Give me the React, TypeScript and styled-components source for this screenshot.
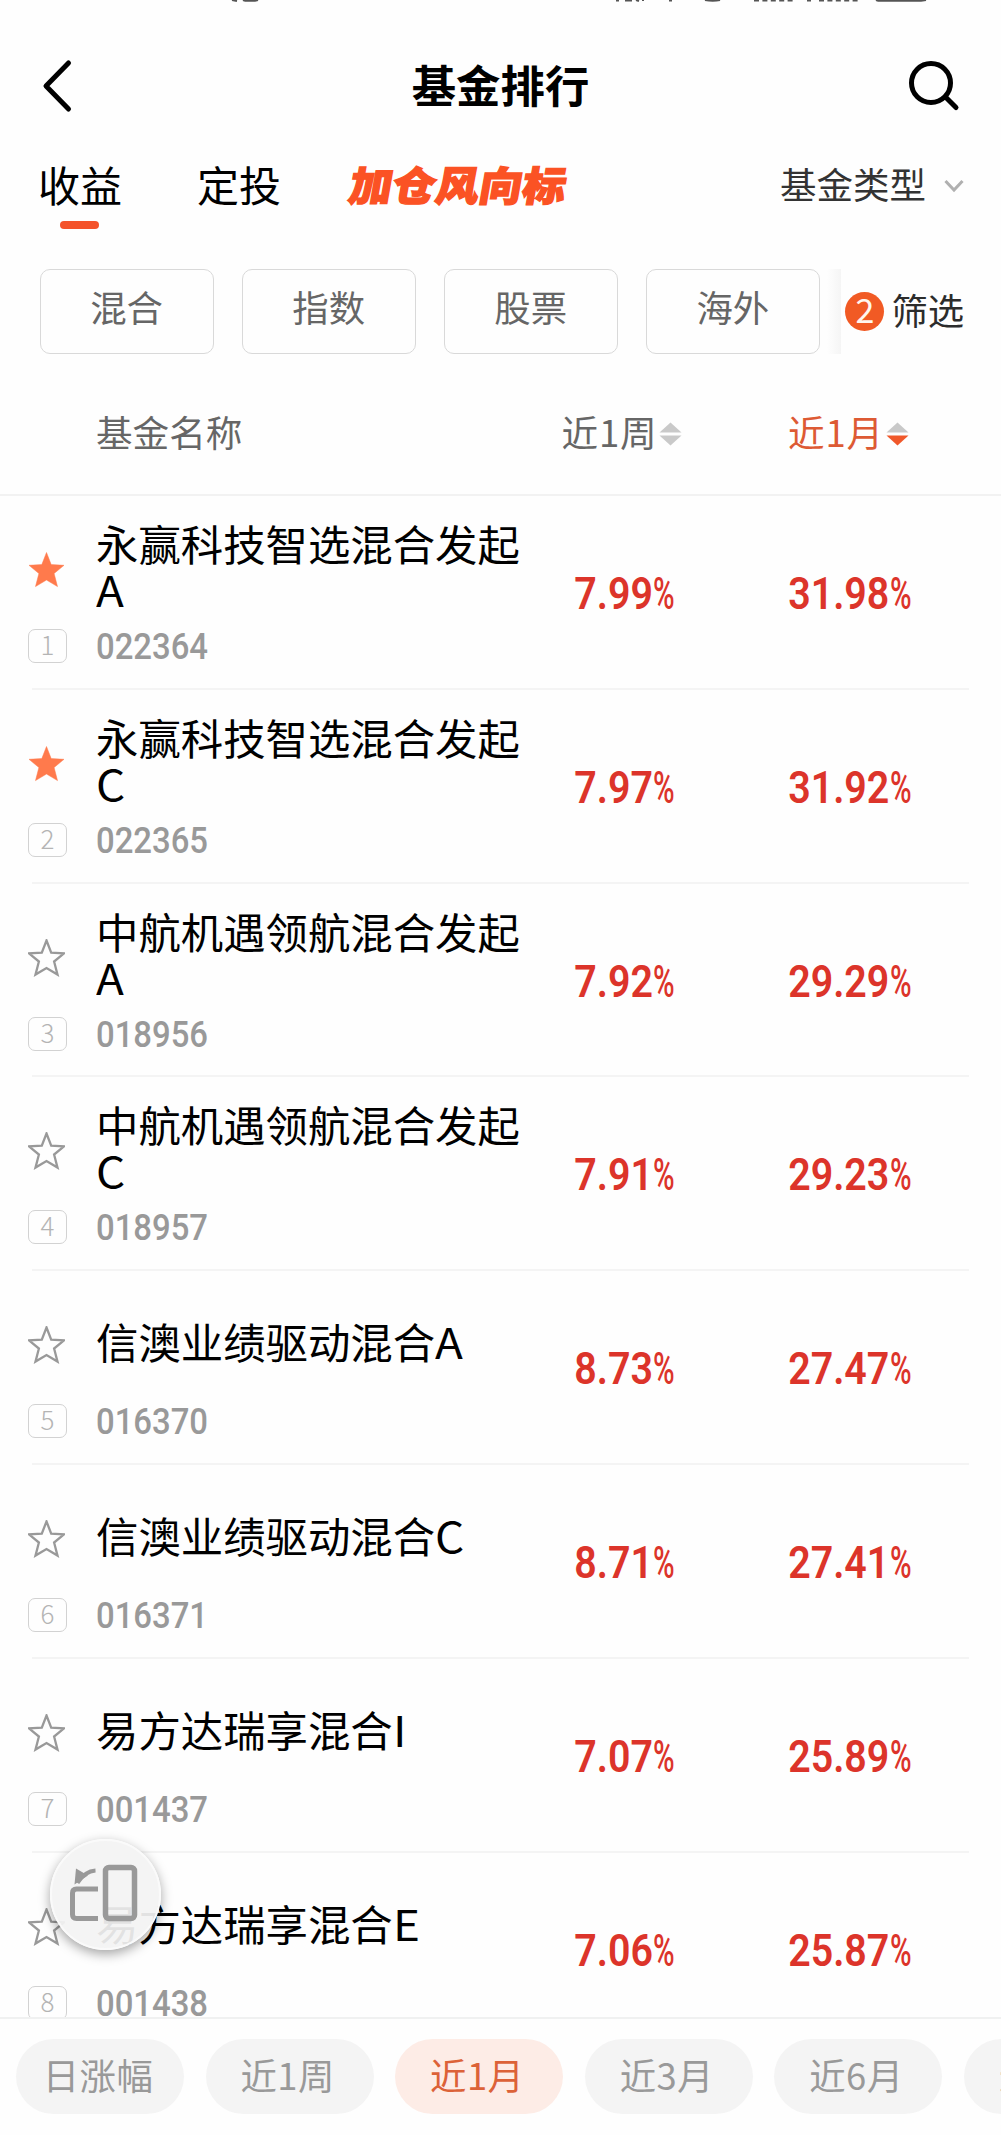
import React from "react";
import styled, { createGlobalStyle } from "styled-components";

const Global = createGlobalStyle`
  * { box-sizing: border-box; }
  html, body { margin: 0; padding: 0; background: #fefefe; }
  body {
    font-family: "Noto Sans CJK SC", sans-serif;
    color: #000;
    overflow: hidden;
  }
`;

const Screen = styled.div`
  position: relative;
  width: 1001px;
  height: 2135px;
  display: flex;
  flex-direction: column;
  overflow: hidden;
  background: #fefefe;
`;

const StatusBar = styled.div`
  height: 4px;
  flex: none;
  svg { display: block; }
`;

const TitleBar = styled.header`
  height: 128px;
  padding: 36px 40px 0;
  display: grid;
  grid-template-columns: 60px 1fr 60px;
  align-items: start;
  align-content: start;
  flex: none;
  svg { display: block; margin-top: 18px; }
`;

const Title = styled.h1`
  margin: 14px 0 0;
  text-align: center;
  font-size: 44.4px;
  line-height: 60px;
  font-weight: 700;
`;

const TabBar = styled.nav`
  flex: none;
  height: 104px;
  padding: 20px 37px 0 38px;
  display: flex;
  align-items: flex-start;
`;

const Tab = styled.div`
  display: flex;
  flex-direction: column;
  width: 84px;
  margin-right: 75px;
  font-size: 42px;
  line-height: 64px;
`;

const Underline = styled.i`
  width: 39px;
  height: 8px;
  margin: 5px 0 0 22px;
  border-radius: 4px;
  background: #f4522a;
`;

const PromoTab = styled.div`
  width: 220px;
  margin-left: -6px;
  font-size: 40.5px;
  line-height: 64px;
  font-weight: 900;
  color: #fb5224;
  white-space: nowrap;
  -webkit-text-stroke: 1.4px #fb5224;
  transform: skewX(-10deg) scaleX(1.07);
  transform-origin: 0 50%;
`;

const TypePicker = styled.div`
  margin-left: auto;
  display: flex;
  align-items: center;
  gap: 18px;
  font-size: 36.5px;
  line-height: 64px;
  color: #333;
  svg { margin-top: 3px; }
`;

const FilterBar = styled.div`
  flex: none;
  height: 86px;
  margin-top: 33px;
  padding-left: 39.500px;
  display: flex;
  align-items: flex-start;
`;

const Chips = styled.div`
  display: flex;
  gap: 27.900px;
`;

const Chip = styled.button`
  width: 174.200px;
  height: 85px;
  padding: 0 0 11px;
  border: 1.5px solid #d9d9d9;
  border-radius: 10px;
  background: #fefefe;
  font: 36.4px/60px "Noto Sans CJK SC", sans-serif;
  color: #666;
`;

const Edge = styled.div`
  width: 14px;
  height: 85px;
  margin-left: 7px;
  background: linear-gradient(to right, #fefefe, #f5f5f5);
`;

const FilterButton = styled.div`
  height: 85px;
  margin-left: 4.500px;
  display: flex;
  align-items: center;
  gap: 7px;
  font-size: 36.4px;
  line-height: 60px;
  color: #2c2c2c;
`;

const Count = styled.span`
  width: 39px;
  height: 39px;
  border-radius: 50%;
  background: #f15a24;
  color: #fff6ee;
  font-size: 34px;
  line-height: 34px;
  text-align: center;
`;

const FilterLabel = styled.span`
  padding-bottom: 5px;
`;

const TableHead = styled.div`
  flex: none;
  height: 141px;
  padding: 47px 0 0 96px;
  display: grid;
  grid-template-columns: 465.500px 226.500px 1fr;
  border-bottom: 2px solid #f2f2f2;
  font-size: 36.6px;
  line-height: 60px;
  color: #666;
`;

const SortHead = styled.div<{ $active?: boolean }>`
  display: flex;
  align-items: center;
  height: 60px;
  gap: 2px;
  letter-spacing: 0.8px;
  color: ${(p) => (p.$active ? "#dd5a34" : "#666")};
  svg { margin-top: 3px; }
`;

const List = styled.main`
  flex: 1;
  min-height: 0;
  overflow: hidden;
`;

const Row = styled.article`
  height: 193.8px;
  margin: 0 32px;
  border-bottom: 2px solid #f4f4f4;
  display: grid;
  grid-template-columns: 64px 440px 1fr 1fr;
`;

const Mark = styled.div`
  margin-left: -4px;
  padding-top: 55px;
  display: flex;
  flex-direction: column;
  align-items: flex-start;
`;

const Rank = styled.span`
  width: 39px;
  height: 34px;
  margin-top: 40px;
  border: 1.5px solid #d2d2d2;
  border-radius: 7px;
  font-size: 26px;
  line-height: 28px;
  font-weight: 300;
  text-align: center;
  color: #b4b4b4;
`;

const Fund = styled.div`
  padding-top: 24px;
`;

const Name = styled.div`
  height: 92px;
  display: flex;
  align-items: center;
  font-size: 42.4px;
  line-height: 46px;
`;

const ShareClass = styled.span`
  display: inline-block;
  transform: scaleX(1.08);
  transform-origin: 0 50%;
`;

const Code = styled.div`
  margin-top: 13px;
  font-family: Roboto, sans-serif;
  font-size: 36.5px;
  line-height: 44px;
  font-weight: 500;
  color: #999;
  transform: scaleX(0.9);
  transform-origin: 0 50%;
`;

const Rate = styled.div<{ $end: number }>`
  display: flex;
  justify-content: flex-end;
  width: 140px;
  margin-left: ${(p) => p.$end - 140}px;
  padding-top: 71px;
  font-family: Roboto, sans-serif;
  font-size: 44.5px;
  line-height: 54px;
  color: #dc342a;
`;

const Digits = styled.span`
  font-weight: 600;
  transform: scaleX(0.885);
  transform-origin: 100% 50%;
`;

const Percent = styled.span`
  width: 22px;
  font-weight: 500;
  transform: scaleX(0.66);
  transform-origin: 0 50%;
`;

const PeriodBar = styled.footer`
  flex: none;
  height: 118px;
  padding: 20px 0 0 16px;
  border-top: 2px solid #f0f1f1;
  display: flex;
  gap: 21.6px;
  background: #fefefe;
`;

const Period = styled.button<{ $active?: boolean }>`
  flex: none;
  width: 168px;
  height: 75px;
  padding: 0 4px 5px 0;
  border: 0;
  border-radius: 38px;
  background: ${(p) => (p.$active ? "#fdece6" : "#f4f4f4")};
  color: ${(p) => (p.$active ? "#dc6238" : "#999")};
  font: 36.4px/60px "Noto Sans CJK SC", sans-serif;
  letter-spacing: 0.4px;
`;

const FloatButton = styled.div`
  position: absolute;
  left: 50px;
  top: 1839px;
  width: 111px;
  height: 111px;
  border-radius: 50%;
  border: 2px solid #fafafa;
  background: rgba(243, 243, 243, 0.93);
  box-shadow: 0 4px 12px rgba(0, 0, 0, 0.36);
  svg { display: block; margin: -2px; }
`;

const starPoints = "18.5,1.5 23.2,13.6 36,14.3 26.1,22.5 29.5,35.6 18.5,29 7.5,35.6 10.9,22.5 1,14.3 13.8,13.6";

const Star = ({ filled }: { filled: boolean }) => (
  <svg width="37" height="38" viewBox="0 0 37 38">
    <polygon
      points={starPoints}
      fill={filled ? "#ff7a4c" : "none"}
      stroke={filled ? "#ff7a4c" : "#999"}
      strokeWidth={filled ? 0.5 : 2.3}
    />
  </svg>
);

const SortArrows = ({ down }: { down?: boolean }) => (
  <svg width="23" height="24" viewBox="0 0 23 24">
    <path d="M11.5 0.5 22.5 10.5H0.5Z" fill="#c9c9c9" />
    <path d="M11.5 23.5 22.5 13.5H0.5Z" fill={down ? "#f0582a" : "#c9c9c9"} />
  </svg>
);

const funds = [
  { name: "永赢科技智选混合发起", cls: "A", code: "022364", week: "7.99", month: "31.98", starred: true },
  { name: "永赢科技智选混合发起", cls: "C", code: "022365", week: "7.97", month: "31.92", starred: true },
  { name: "中航机遇领航混合发起", cls: "A", code: "018956", week: "7.92", month: "29.29", starred: false },
  { name: "中航机遇领航混合发起", cls: "C", code: "018957", week: "7.91", month: "29.23", starred: false },
  { name: "信澳业绩驱动混合", cls: "A", code: "016370", week: "8.73", month: "27.47", starred: false },
  { name: "信澳业绩驱动混合", cls: "C", code: "016371", week: "8.71", month: "27.41", starred: false },
  { name: "易方达瑞享混合", cls: "I", code: "001437", week: "7.07", month: "25.89", starred: false },
  { name: "易方达瑞享混合", cls: "E", code: "001438", week: "7.06", month: "25.87", starred: false },
];

const chips = ["混合", "指数", "股票", "海外"];
const periods = ["日涨幅", "近1周", "近1月", "近3月", "近6月", "近1年"];

export default function App() {
  return (
    <Screen>
      <Global />
      <StatusBar>
        <svg width="1001" height="4" viewBox="0 0 1001 4" fill="none" stroke="#555" strokeWidth="2">
          <path d="M232 0l5 1M243 0q2 .8 5 .8h7l3-.8" />
          <path d="M616 .5h3M625 .5h7M636 0l3 1M643 0v1M669 .5h3M705 0q8 1.600 15 0" />
          <path d="M754 .6h39M807 .6h4M819 .6h40" strokeDasharray="5 3.400" />
          <path d="M876 0q2 .8 5 .8h40l5-.8" />
        </svg>
      </StatusBar>
      <TitleBar>
        <svg width="34" height="56" viewBox="0 0 34 56" fill="none" stroke="#000" strokeWidth="5" strokeLinecap="round" strokeLinejoin="round">
          <path d="M28.5 5 6 28 28.5 51" />
        </svg>
        <Title>基金排行</Title>
        <svg width="60" height="56" viewBox="0 0 60 56" fill="none" stroke="#000" strokeWidth="5" strokeLinecap="round">
          <circle cx="30" cy="25" r="19.5" />
          <path d="M45 39.5 55 49.5" />
        </svg>
      </TitleBar>
      <TabBar>
        <Tab>
          收益
          <Underline />
        </Tab>
        <Tab>定投</Tab>
        <PromoTab>加仓风向标</PromoTab>
        <TypePicker>
          基金类型
          <svg width="20" height="14" viewBox="0 0 20 14" fill="none" stroke="#b0b0b0" strokeWidth="3">
            <path d="M1.5 2 10 11 18.5 2" />
          </svg>
        </TypePicker>
      </TabBar>
      <FilterBar>
        <Chips>
          {chips.map((c) => (
            <Chip key={c}>{c}</Chip>
          ))}
        </Chips>
        <Edge />
        <FilterButton>
          <Count>2</Count>
          <FilterLabel>筛选</FilterLabel>
        </FilterButton>
      </FilterBar>
      <TableHead>
        <span>基金名称</span>
        <SortHead>
          近1周
          <SortArrows />
        </SortHead>
        <SortHead $active>
          近1月
          <SortArrows down />
        </SortHead>
      </TableHead>
      <List>
        {funds.map((f, i) => (
          <Row key={f.code}>
            <Mark>
              <Star filled={f.starred} />
              <Rank>{i + 1}</Rank>
            </Mark>
            <Fund>
              <Name>
                <div>
                  {f.name}
                  <ShareClass>{f.cls}</ShareClass>
                </div>
              </Name>
              <Code>{f.code}</Code>
            </Fund>
            <Rate $end={139}>
              <Digits>{f.week}</Digits>
              <Percent>%</Percent>
            </Rate>
            <Rate $end={159}>
              <Digits>{f.month}</Digits>
              <Percent>%</Percent>
            </Rate>
          </Row>
        ))}
      </List>
      <PeriodBar>
        {periods.map((p) => (
          <Period key={p} $active={p === "近1月"}>
            {p}
          </Period>
        ))}
      </PeriodBar>
      <FloatButton>
        <svg width="111" height="111" viewBox="0 0 111 111" fill="none" stroke="#999" strokeWidth="5.5">
          <rect x="55.5" y="28.5" width="29" height="51" rx="3.5" />
          <path d="M48 50H26.5Q22.5 50 22.5 54V75.5Q22.5 79.5 26.5 79.5H48" strokeWidth="5" />
          <path d="M45.500 31.5Q35 32 27.500 44" strokeWidth="4" />
          <path d="M26 29.5 38 36.5 24.500 45.500Z" fill="#999" stroke="none" />
        </svg>
      </FloatButton>
    </Screen>
  );
}
